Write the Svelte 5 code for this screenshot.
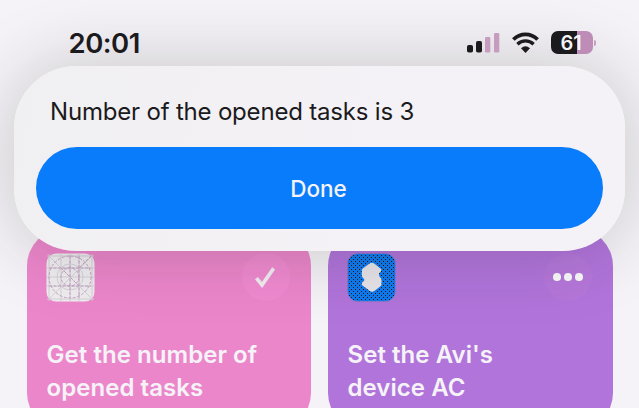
<script>
  const cards = [
    { id: 'tasks', lines: ['Get the number of', 'opened tasks'], color: '#ec86cb' },
    { id: 'climate', lines: ["Set the Avi's", 'device AC'], color: '#b174db' }
  ];
</script>

<main class="screen">
  <section class="cards">
    {#each cards as card (card.id)}
      <article class="card" style:background-color={card.color}>
        <header class="card-head">
          {#if card.id === 'tasks'}
            <svg width="49" height="49" viewBox="0 0 49 49" fill="none">
              <rect x="0.5" y="0.5" width="48" height="48" rx="9.5" fill="#efedf0" />
              <g stroke="#d3ced4" stroke-width="0.9">
                <path d="M3 1v47M46 1v47M1 3h47M1 46h47M15 1v47M33 1v47M1 15h47M1 33h47M24 1v47M1 24h47M3 3l43 43M46 3L3 46" />
                <circle cx="24" cy="24" r="13" />
              </g>
              <g stroke="#c19bbf" stroke-width="0.9" stroke-dasharray="3 1.5">
                <circle cx="24" cy="24" r="21" />
                <circle cx="24" cy="24" r="9" />
                <path d="M24 3v42M3 15h42M3 33h42M33 3v42M15 15l18 18M45 3L32 16" />
              </g>
            </svg>
            <span class="badge done">
              <svg width="24" height="24" viewBox="0 0 24 24" fill="none">
                <path d="M2.4 13.2L8 20L19.6 3.4" stroke="#f1eef2" stroke-width="3.6" stroke-linejoin="miter" />
              </svg>
            </span>
          {:else}
            <svg width="49" height="49" viewBox="0 0 49 49">
              <defs>
                <pattern id="weave" width="4" height="4" patternUnits="userSpaceOnUse">
                  <rect width="4" height="4" fill="#087cf8" />
                  <path d="M0 0h1v1H0zM2 2h1v1H2z" fill="#1c1b20" />
                  <path d="M3 0h1v1H3zM1 3h1v1H1z" fill="#3b70c2" />
                </pattern>
              </defs>
              <rect x="0.5" y="0.5" width="48" height="48" rx="10" fill="url(#weave)" stroke="#987cc4" stroke-width="0.7" />
              <path d="M24.5 9.7Q26 9.4 27.5 10.8L33.4 15.6Q35 16.8 34 18.2L32 20.4L32.4 23.5L34.5 26V31.7Q34 33 32.5 34L27 38.2Q25 39.4 22.8 38L15.3 32.2Q14.2 31.4 14.8 30L17.6 27L14.8 23.2V17.3Q15 16 16.4 15.1L22.6 10.4Q23.5 9.7 24.5 9.7Z" fill="#e6e4e8" />
            </svg>
            <span class="badge more">
              <i></i><i></i><i></i>
            </span>
          {/if}
        </header>
        <h2 class={card.id}>
          {#each card.lines as line}<span>{line}</span>{/each}
        </h2>
      </article>
    {/each}
  </section>

  <div class="dialog" role="dialog" aria-label="Shortcut result">
    <p>Number of the opened tasks is 3</p>
    <button type="button">Done</button>
  </div>

  <div class="status">
    <time>20:01</time>
    <div class="indicators">
      <svg class="signal" width="33" height="20" viewBox="0 0 33 20">
        <rect x="0" y="12" width="6" height="7.5" rx="1.8" fill="#1b1a1c" />
        <rect x="9" y="8" width="6" height="11.5" rx="1.8" fill="#1b1a1c" />
        <rect x="18" y="4" width="5.3" height="15.5" rx="1.3" fill="#c69dbf" />
        <rect x="27" y="0" width="5.3" height="19.5" rx="1.3" fill="#c69dbf" />
      </svg>
      <svg class="wifi" width="27" height="21" viewBox="0 0 27 21" fill="none" stroke="#1b1a1c">
        <path d="M1.4 7.5C8.2.6 18.8.6 25.6 7.5" stroke-width="3.8" />
        <path d="M5.4 12.2C10.1 7.8 16.9 7.8 21.6 12.2" stroke-width="3.4" />
        <path d="M9 16.2Q13.5 12.2 18 16.2L13.5 20.9Z" fill="#1b1a1c" stroke="none" />
      </svg>
      <div class="battery"><span>61</span></div>
      <i class="tip"></i>
    </div>
  </div>
</main>

<style>
  :global(body) {
    margin: 0;
  }

  .screen {
    position: relative;
    width: 639px;
    height: 408px;
    overflow: hidden;
    box-sizing: border-box;
    padding: 228px 26px 0 27px;
    background: #f5f3f7;
    font-family: Inter, 'Liberation Sans', sans-serif;
  }

  .cards {
    display: grid;
    grid-template-columns: 284px 285px;
    gap: 17px;
  }

  .card {
    height: 203px;
    box-sizing: border-box;
    padding: 24px 21px 0 19px;
    border-radius: 38px;
  }

  .card-head {
    display: flex;
    align-items: center;
    justify-content: space-between;
    height: 50px;
  }

  .badge {
    display: flex;
    align-items: center;
    justify-content: center;
    width: 48px;
    height: 48px;
    border-radius: 50%;
  }

  .done {
    background: #f08ad0;
  }

  .more {
    gap: 3.4px;
    background: #b577da;
  }

  .more i {
    width: 7.6px;
    height: 7.6px;
    border-radius: 50%;
    background: #f9f8fa;
  }

  h2 {
    display: flex;
    flex-direction: column;
    margin: 35.5px 0 0 0.5px;
    color: #f5f3f7;
    font-size: 24px;
    line-height: 33px;
    font-weight: 600;
    letter-spacing: 0.05px;
    white-space: nowrap;
  }

  .dialog {
    position: absolute;
    z-index: 1;
    top: 66px;
    left: 14px;
    width: 611px;
    height: 185px;
    box-sizing: border-box;
    padding: 30px 22px 22px;
    display: flex;
    flex-direction: column;
    justify-content: space-between;
    border-radius: 62px;
    background: linear-gradient(100deg, #f0eff1, #f4f2f6 60%);
    box-shadow: 0 0 72px rgba(30, 30, 30, 0.22);
  }

  p {
    margin: 0 0 0 14px;
    color: #1b1a1c;
    font-size: 24px;
    line-height: 32px;
    letter-spacing: -0.19px;
    white-space: nowrap;
  }

  button {
    height: 82px;
    padding: 0 2px 0 0;
    border: 0;
    border-radius: 41px;
    background: #087cfa;
    color: #f5f3f7;
    font: 500 22.5px Inter, sans-serif;
  }

  .status {
    position: absolute;
    z-index: 2;
    top: 26px;
    left: 68.5px;
    right: 43px;
    display: flex;
    align-items: center;
    justify-content: space-between;
    height: 33px;
    color: #1b1a1c;
  }

  time {
    font-size: 27.5px;
    font-weight: 600;
    letter-spacing: -0.5px;
  }

  .indicators {
    display: flex;
    align-items: center;
  }

  .wifi {
    margin-left: 12px;
  }

  .battery {
    display: flex;
    align-items: center;
    justify-content: center;
    width: 42px;
    height: 23px;
    margin-left: 12px;
    border-radius: 7px;
    background: linear-gradient(90deg, #1b1a1c 0 61%, #bd8db7 61%);
    color: #f5f3f7;
    font-size: 20px;
    font-weight: 600;
  }

  .battery span {
    padding-right: 2px;
  }

  .tip {
    width: 2px;
    height: 6px;
    margin-left: 1px;
    border-radius: 0 2px 2px 0;
    background: #c69dbf;
  }
</style>
